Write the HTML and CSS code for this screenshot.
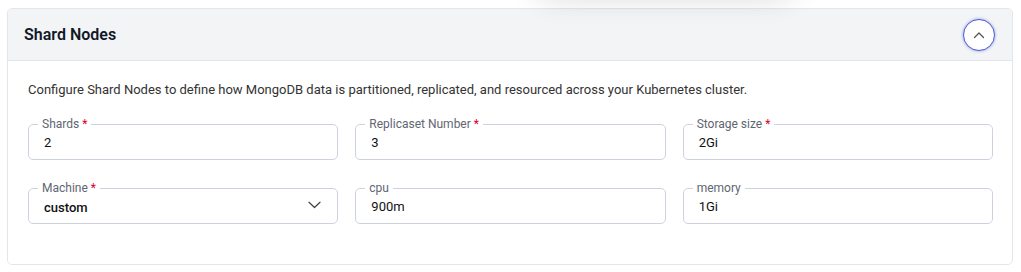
FILE: index.html
```html
<!DOCTYPE html>
<html lang="en">
<head>
    <meta charset="UTF-8">
    <meta name="viewport" content="width=device-width, initial-scale=1.0">
    <title>Shard Nodes</title>
    <link rel="stylesheet" href="styles.css">
</head>
<body>
    <div class="popover-shadow"></div>
    <section class="panel">
        <div class="panel-header">
            <h3>Shard Nodes</h3>
            <button type="button" class="toggle" aria-label="Collapse">
                <svg width="12" height="8" viewBox="0 0 12 8"><path d="M1.5 6.5 L6 2 L10.5 6.5" fill="none" stroke="#555" stroke-width="1.3" stroke-linecap="round" stroke-linejoin="round"/></svg>
            </button>
        </div>
        <div class="panel-body">
            <p class="desc">Configure Shard Nodes to define how MongoDB data is partitioned, replicated, and resourced across your Kubernetes cluster.</p>
            <form class="fields">
                <fieldset class="field">
                    <legend>Shards <span class="req">*</span></legend>
                    <input type="text" name="shards" value="2">
                </fieldset>
                <fieldset class="field">
                    <legend>Replicaset Number <span class="req">*</span></legend>
                    <input type="text" name="replicas" value="3">
                </fieldset>
                <fieldset class="field">
                    <legend>Storage size <span class="req">*</span></legend>
                    <input type="text" name="storage" value="2Gi">
                </fieldset>
                <fieldset class="field">
                    <legend>Machine <span class="req">*</span></legend>
                    <div class="select-wrap">
                        <select name="machine">
                            <option>custom</option>
                        </select>
                        <svg width="13" height="8" viewBox="0 0 13 8"><path d="M1 1.2 L6.5 6.5 L12 1.2" fill="none" stroke="#444" stroke-width="1.2" stroke-linecap="round" stroke-linejoin="round"/></svg>
                    </div>
                </fieldset>
                <fieldset class="field">
                    <legend>cpu</legend>
                    <input type="text" name="cpu" value="900m">
                </fieldset>
                <fieldset class="field">
                    <legend>memory</legend>
                    <input type="text" name="memory" value="1Gi">
                </fieldset>
            </form>
        </div>
    </section>
</body>
</html>
```

FILE: styles.css
```css
body {
    font-family: Roboto, "Liberation Sans", Arial, sans-serif;
    background-color: #ffffff;
    margin: 8px 8px 8px 7px;
    color: #1f2937;
}
.popover-shadow {
    position: absolute;
    left: 530px;
    top: -60px;
    width: 270px;
    height: 56px;
    border-radius: 30px;
    background: #ffffff;
    box-shadow: 0 4px 28px rgba(0, 0, 0, 0.13);
    z-index: 2;
}
.panel {
    border: 1px solid #e2e6ed;
    border-radius: 5px;
    background: white;
    overflow: hidden;
}
.panel-header {
    display: flex;
    align-items: center;
    justify-content: space-between;
    height: 51px;
    padding: 0 17px 0 16px;
    background: #f3f4f6;
    border-bottom: 1px solid #e2e6ed;
}
.panel-header h3 {
    margin: 0;
    font-size: 16px;
    font-weight: 600;
    color: #111827;
}
.toggle {
    display: flex;
    align-items: center;
    justify-content: center;
    width: 32px;
    height: 32px;
    padding: 0;
    border-radius: 50%;
    background: white;
    border: 1.5px solid #4c5bd6;
    box-shadow: 0 0 3px rgba(76, 91, 214, 0.6);
    cursor: pointer;
}
.panel-body {
    padding: 19px 19px 40px 20px;
}
.desc {
    margin: 0 0 17px;
    font-size: 13px;
    line-height: 20px;
    color: #333;
}
.fields {
    display: grid;
    grid-template-columns: repeat(3, 1fr);
    column-gap: 17px;
    row-gap: 21px;
}
.field {
    margin: 0;
    min-width: 0;
    padding: 0 15px 2px 15px;
    border: 1px solid #cdd3de;
    border-radius: 5px;
}
.field legend {
    margin-left: -6px;
    padding: 0 4px;
    font-size: 12px;
    line-height: 14px;
    color: #5f6672;
}
.req {
    color: #d6002a;
}
.field input,
.field select {
    display: block;
    width: 100%;
    height: 30px;
    margin-top: -4px;
    padding: 0;
    border: none;
    outline: none;
    background: transparent;
    font-family: inherit;
    font-size: 13px;
    font-weight: 400;
    color: #111;
}
.select-wrap {
    display: flex;
    align-items: center;
    gap: 8px;
    margin-top: -4px;
    padding-right: 1px;
}
.select-wrap select {
    flex: 1;
    margin-top: 0;
    appearance: none;
    -webkit-appearance: none;
    font-weight: 500;
    padding-top: 3px;
}
.select-wrap svg {
    margin-top: -3px;
}
```
